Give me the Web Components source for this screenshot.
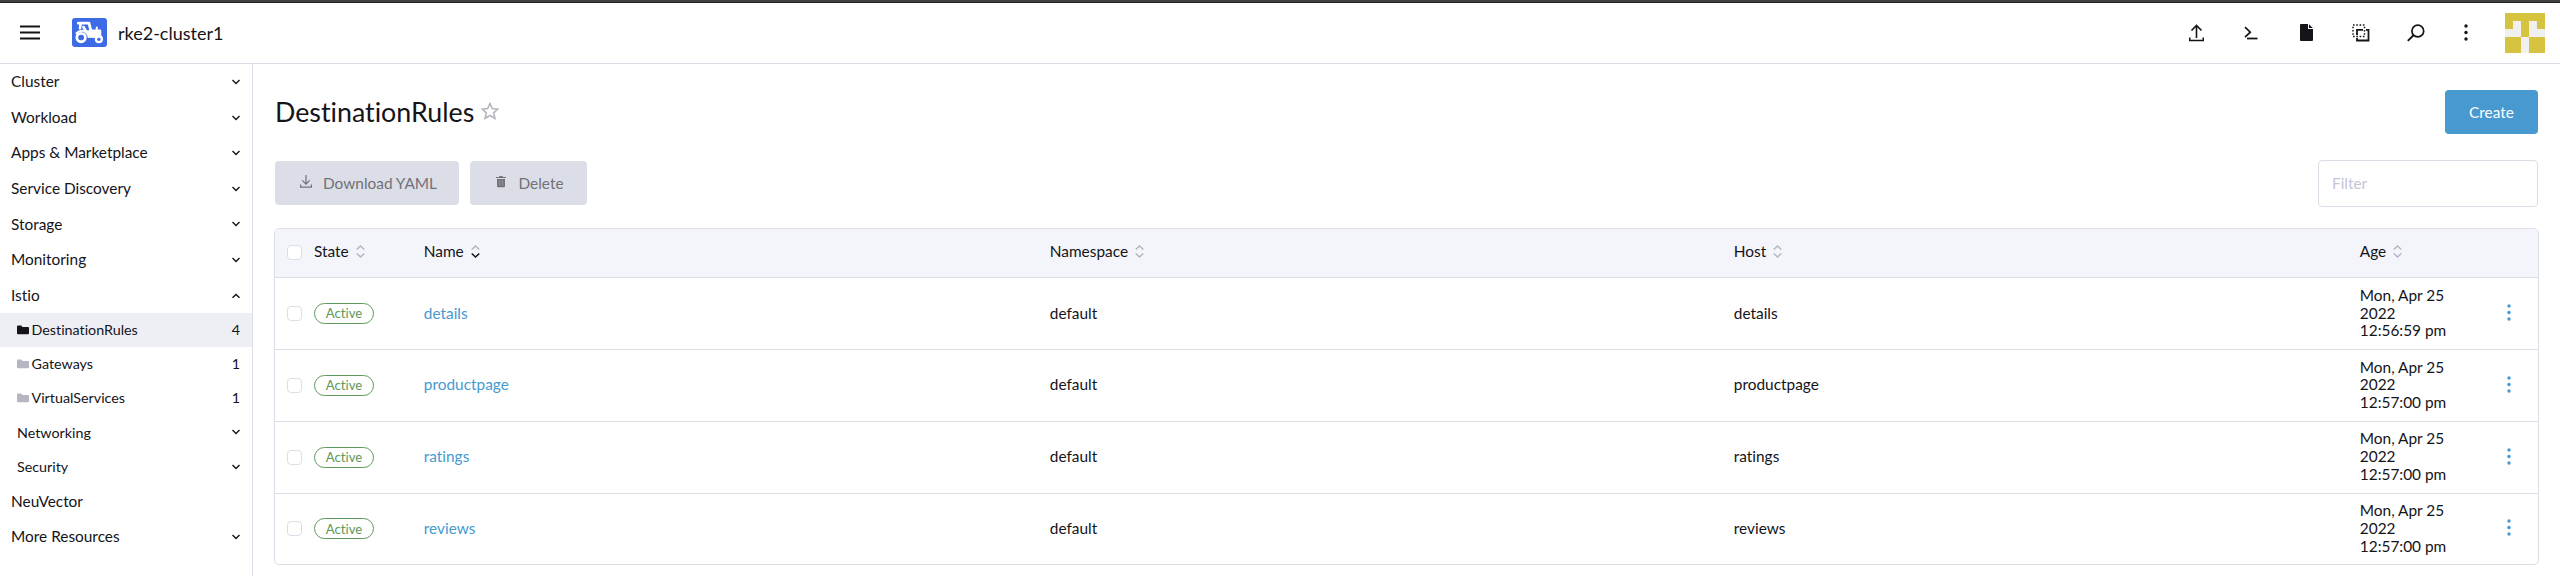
<!DOCTYPE html>
<html lang="en"><head><meta charset="utf-8"><title>DestinationRules</title>
<style>
html,body{margin:0;height:100%;overflow:hidden;background:#fff}
body{font:15.4px/17.8px Lato,sans-serif;color:#141419;font-variant-ligatures:none}
</style></head><body>
<app-shell></app-shell>
<script>
const define=(name,html)=>customElements.define(name,class extends HTMLElement{
  connectedCallback(){
    if(this.shadowRoot)return;
    const t=document.createElement('template');
    t.innerHTML=typeof html==='function'?html(this):html;
    this.attachShadow({mode:'open'}).append(t.content.cloneNode(true));
  }
});
const svg=(w,h,body)=>`<svg width="${w}" height="${h}" viewBox="0 0 ${w} ${h}" fill="none" stroke="currentColor" stroke-width="1.5">${body}</svg>`;
const icons={
  menu:svg(20,15,'<path stroke-width="2" d="M0 1.500h20M0 7.500h20M0 13.500h20"/>'),
  logo:svg(35,29,'<rect width="35" height="29" rx="3" fill="#3d6ae5" stroke="none"/><g stroke="#fff" stroke-linejoin="round" stroke-linecap="round"><path d="M6.300 5.200H17l1.900 7.600h9v4.500" stroke-width="2.800"/><path d="M8.600 5.500 8 10.300M11.500 9l2.500 4.500h5l3.500 5h-5" stroke-width="2.600"/><path d="M19 14h8v2.500l-3 2.500h-6l-3-5z" fill="#fff" stroke-width="1"/><path d="M4.500 15.200q4-4 8.500-1.500 3 2 3.600 5.300" stroke-width="2"/><path d="M24.800 12.500V9.500" stroke-width="2"/><circle cx="9.100" cy="19.600" r="4.200" stroke-width="2.900"/><circle cx="26.900" cy="21.200" r="2.800" stroke-width="2.600"/></g><circle cx="9.100" cy="19.600" r="2.700" fill="#3d6ae5" stroke="none"/><circle cx="26.900" cy="21.200" r="1.500" fill="#3d6ae5" stroke="none"/>'),
  down:svg(8,6,'<path d="M.5 1 4 4.400 7.500 1" stroke-width="1.400"/>'),
  up:svg(8,6,'<path d="M.5 4.800 4 1.400l3.500 3.400" stroke-width="1.400"/>'),
  folder:svg(12,10,'<path d="M0 1.500Q0 .5 1 .5h3.200L5.500 2H11q1 0 1 1v5.200q0 1-1 1H1q-1 0-1-1z" fill="currentColor" stroke="none"/>'),
  upload:svg(15,18,'<path d="M7.500 14V2M2.500 6.500l5-5 5 5M.7 13.500v3h13.600v-3" stroke-width="1.600"/>'),
  shell:svg(14,14,'<path d="M1 1.200 6.300 6.200 1 11.200" stroke-width="1.700"/><path d="M3 12.500h10.500" stroke-width="1.800"/>'),
  file:svg(13,17,'<path d="M1 0h7v5h5v11q0 1-1 1H1q-1 0-1-1V1q0-1 1-1zM9 .3 12.700 4H9z" fill="currentColor" stroke="none"/>'),
  copy:svg(18,18,'<path d="M5 5.800h11.500v10.700H5z" stroke-width="1.800"/><path d="M12.500 3.800v4M3 12.500h4" stroke="#fff" stroke-width="3"/><path d="M1 1h11.500v11.500H1z" stroke-width="1.500" stroke-dasharray="1.600 1.686"/>'),
  search:svg(18,18,'<circle cx="10.800" cy="7" r="5.900" stroke-width="1.700"/><path d="M6.500 11.300.8 16.900" stroke-width="1.900"/>'),
  dots:svg(4,17,'<g fill="currentColor" stroke="none"><circle cx="2" cy="2" r="1.700"/><circle cx="2" cy="8.500" r="1.700"/><circle cx="2" cy="15" r="1.700"/></g>'),
  star:svg(18,18,'<path d="m9 1.500 2.300 5 5.500.6-4.100 3.700 1.200 5.500L9 13.500l-4.900 2.800 1.200-5.500-4.100-3.700 5.500-.6z" stroke-width="1.600"/>'),
  download:svg(12,13,'<path d="M6 0v9M2.300 5.400 6 9.100l3.700-3.700M.6 9.500v2.700h10.800V9.500" stroke-width="1.200"/>'),
  trash:svg(10,12,'<path d="M0 1.100h3L3.600 0h2.800L7 1.100h3v1H0zM1 2.900h8V10q0 1.200-1.200 1.200H2.200Q1 11.200 1 10z" fill="currentColor" stroke="none"/><path d="M3.200 4v6M5 4v6M6.800 4v6" stroke="#dcdee7" stroke-width=".3"/>'),
  sort:svg(9,13,'<path d="M.7 4.500 4.500 1l3.800 3.500" stroke="#b6b6c2"/><path d="M.7 8.500 4.500 12l3.800-3.500" stroke="var(--sort,#b6b6c2)"/>'),
  avatar:svg(40,40,'<g stroke="none" shape-rendering="crispEdges"><path fill="#d6c340" d="M0 0h40v40H0z"/><path fill="#f0f0f0" d="M8 8h8v16H8zM24 8h8v16h-8zM0 16h8v8H0zM32 16h8v8h-8zM16 24h8v16h-8z"/></g>')
};
define('ui-icon',e=>`<style>:host{display:inline-flex;flex:none}svg{display:block}</style>${icons[e.getAttribute('name')]}`);
define('top-bar',`<style>
:host{display:flex;align-items:center;box-sizing:border-box;height:64px;border-top:2px solid #414143;border-bottom:1px solid #dcdee7;padding:0 15px 0 20px;box-shadow:inset 0 1px #212123}
.logo{margin:0 11px 0 32px}.name{font-size:18px;line-height:22px;flex:1;margin-top:1px}
.tool{width:55px;display:flex;justify-content:center}.more{width:45px}.av{margin:1px 0 0 16.500px}
</style><ui-icon name="menu"></ui-icon><ui-icon class="logo" name="logo"></ui-icon><span class="name">rke2-cluster1</span>
${['upload','shell','file','copy','search'].map(n=>`<span class="tool"><ui-icon name="${n}"></ui-icon></span>`).join('')}<span class="tool more"><ui-icon name="dots"></ui-icon></span><ui-icon class="av" name="avatar"></ui-icon>`);
define('nav-item',e=>{
  const a=n=>e.getAttribute(n);
  return `<style>
:host{display:flex;align-items:center;box-sizing:border-box;height:35.6px;padding:.6px 12px 0 11px}
:host([sub]){height:34.1px;font-size:14.3px;padding:0 12px 0 17px}
:host([active]){background:#eeeff4}
.t{flex:1}.f{margin:0 2.500px 1px 0;color:#b6b6c2}:host([active]) .f{color:#141419}
.n{margin-top:-1px}
</style>${e.hasAttribute('count')?'<ui-icon class="f" name="folder"></ui-icon>':''}<span class="t"><slot></slot></span>${a('count')?`<span class="n">${a('count')}</span>`:''}${a('arrow')?`<ui-icon name="${a('arrow')}"></ui-icon>`:''}`});
define('side-nav',`<style>:host{display:block;box-sizing:border-box;width:253px;border-right:1px solid #dcdee7}</style>
${['Cluster','Workload','Apps &amp; Marketplace','Service Discovery','Storage','Monitoring'].map(t=>`<nav-item arrow="down">${t}</nav-item>`).join('')}
<nav-item arrow="up">Istio</nav-item>
<nav-item sub active count="4">DestinationRules</nav-item><nav-item sub count="1">Gateways</nav-item><nav-item sub count="1">VirtualServices</nav-item>
<nav-item sub arrow="down">Networking</nav-item><nav-item sub arrow="down">Security</nav-item>
<nav-item>NeuVector</nav-item><nav-item arrow="down">More Resources</nav-item>`);
define('ui-button',e=>`<style>
:host{display:inline-flex;align-items:center;justify-content:flex-start;white-space:nowrap;box-sizing:border-box;height:44px;border-radius:4px;background:#dcdee7;color:#717179;padding:1px 0 0 25px}
:host([primary]){background:#4799d0;color:#fff;padding:1px 0 0;justify-content:center}
ui-icon{margin:0 11px 4px 0}:host([icon=trash]) ui-icon{margin-right:12.500px;margin-left:1px}
</style>${e.hasAttribute('icon')?`<ui-icon name="${e.getAttribute('icon')}"></ui-icon>`:''}<slot></slot>`);
define('check-box',`<style>:host{display:block;box-sizing:border-box;width:15px;height:15px;border:1px solid #dcdee7;border-radius:4px;background:#fff}</style>`);
define('state-badge',`<style>:host{display:inline-flex;align-items:center;justify-content:center;box-sizing:border-box;width:60px;height:21px;border:1px solid #5d995d;border-radius:11px;color:#5d995d;font-size:13.2px;line-height:16px}</style><slot></slot>`);
define('sort-head',`<style>:host{display:flex;align-items:center;gap:7px;padding-bottom:2px}:host([sorted]){--sort:#141419}</style><slot></slot><ui-icon name="sort"></ui-icon>`);
define('data-row',`<style>
:host{display:grid;grid-template-columns:39px 109.500px 626px 684px 626px 107.500px 1fr;align-items:center;height:70.85px;border-top:1px solid #dcdee7}
:host([head]){height:48px;border:0;background:#f4f5fa}
check-box{margin-left:12px}:host([head]) check-box{margin-bottom:2px}
</style><check-box></check-box><slot></slot>`);
define('data-table',`<style>
:host{display:block;border:1px solid #dcdee7;border-radius:5px;overflow:hidden}
.cell,sort-head:not(:first-child){margin-left:.3px}
.link{color:#4799d0}.act{margin-left:39.500px;color:#4799d0;padding-bottom:2px}
</style><data-row head><sort-head>State</sort-head><sort-head sorted>Name</sort-head><sort-head>Namespace</sort-head><sort-head>Host</sort-head><sort-head>Age</sort-head></data-row>
${[['details','56:59'],['productpage','57:00'],['ratings','57:00'],['reviews','57:00']].map(([n,t])=>`<data-row><state-badge>Active</state-badge><span class="cell link">${n}</span><span class="cell">default</span><span class="cell">${n}</span><span class="cell">Mon, Apr 25<br>2022<br>12:${t} pm</span><ui-icon class="act" name="dots"></ui-icon></data-row>`).join('')}`);
define('filter-field',`<style>:host{display:flex;align-items:center;box-sizing:border-box;width:220px;height:47px;border:1px solid #dcdee7;border-radius:4px;padding:0 13px;color:#c4c5d6}</style><slot></slot>`);
define('list-page',`<style>
:host{display:block;padding:26px 21px 0 21px}
.title{display:flex;align-items:center;height:44px;padding:0 1px 0 1px}
h1{font-size:26.8px;line-height:32px;font-weight:400;margin:0}.star{color:#b6b6c2;margin:0 auto 2px 7px}
.bar{display:flex;align-items:center;gap:11px;height:47px;margin:26px 1px 21px}
.bar ui-button{margin-bottom:1px}
filter-field{margin-left:auto}
</style><div class="title"><h1>DestinationRules</h1><ui-icon class="star" name="star"></ui-icon><ui-button primary style="width:93px">Create</ui-button></div>
<div class="bar"><ui-button icon="download" style="width:184px">Download YAML</ui-button><ui-button icon="trash" style="width:117px">Delete</ui-button><filter-field>Filter</filter-field></div>
<data-table></data-table>`);
define('app-shell',`<style>:host{display:grid;grid-template:64px 1fr/253px 1fr;height:576px}top-bar{grid-column:1/3}</style><top-bar></top-bar><side-nav></side-nav><list-page></list-page>`);
</script></body></html>
